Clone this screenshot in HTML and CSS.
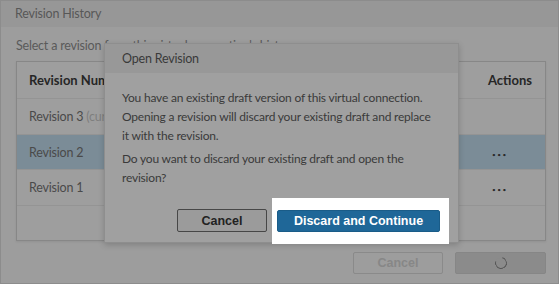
FILE: index.html
```html
<!DOCTYPE html>
<html lang="en">
<head>
  <meta charset="UTF-8">
  <title>Revision History</title>
  <link rel="stylesheet" href="styles.css">
</head>
<body>
  <div class="screen">
    <div class="page-head">Revision History</div>
    <div class="page-body">
      <p class="intro">Select a revision from this virtual connection's history.</p>
      <div class="rev-table">
        <div class="rev-row head">
          <div class="c-name">Revision Number</div>
          <div class="c-date"></div>
          <div class="c-actions">Actions</div>
        </div>
        <div class="rev-row">
          <div class="c-name">Revision 3 <span class="muted">(current)</span></div>
          <div class="c-date"></div>
          <div class="c-actions"></div>
        </div>
        <div class="rev-row selected">
          <div class="c-name">Revision 2</div>
          <div class="c-date"></div>
          <div class="c-actions"><span class="dots">&bull;&bull;&bull;</span></div>
        </div>
        <div class="rev-row">
          <div class="c-name">Revision 1</div>
          <div class="c-date"></div>
          <div class="c-actions"><span class="dots">&bull;&bull;&bull;</span></div>
        </div>
        <div class="rev-row empty"></div>
      </div>
      <div class="page-foot">
        <button class="btn btn-off">Cancel</button>
        <button class="btn btn-busy"><span class="spinner"></span></button>
      </div>
    </div>

    <div class="modal">
      <div class="modal-head">Open Revision</div>
      <div class="modal-body">
        <p>You have an existing draft version of this virtual connection. Opening a revision will discard your existing draft and replace it with the revision.</p>
        <p>Do you want to discard your existing draft and open the revision?</p>
      </div>
      <div class="modal-foot">
        <button class="btn btn-cancel">Cancel</button>
        <div class="highlight">
          <button class="btn btn-primary">Discard and Continue</button>
        </div>
      </div>
    </div>
  </div>
</body>
</html>
```

FILE: styles.css
```css
* {
  box-sizing: border-box;
}
body {
  margin: 0;
  font-family: Lato, "Liberation Sans", sans-serif;
  font-size: 12px;
  letter-spacing: -0.2px;
  color: #3c3c3c;
}
.screen {
  position: relative;
  width: 559px;
  height: 284px;
  background-color: #9d9d9d;
  border: 1px solid #8c8c8c;
  overflow: hidden;
}
.page-head {
  height: 26px;
  background-color: #979797;
  padding: 5px 0 0 14px;
  font-size: 12.5px;
  color: #575757;
}
.page-body {
  padding: 0 12px 0 15px;
}
.intro {
  margin: 11px 0 8px;
  font-size: 12.5px;
  color: #5a5a5a;
  white-space: nowrap;
}
.rev-table {
  border: 1px solid #878787;
  background-color: #9e9e9e;
  box-shadow: 0 1px 2px rgba(0, 0, 0, 0.08);
}
.rev-row {
  display: flex;
  align-items: center;
  height: 36px;
  border-bottom: 1px solid #949494;
  font-size: 12.5px;
  color: #4a4a4a;
}
.rev-row.head {
  height: 37px;
  font-weight: bold;
  color: #262626;
  font-size: 13px;
  letter-spacing: 0;
}
.rev-row.selected {
  background-color: #7b8c97;
  height: 35px;
}
.rev-row.empty {
  border-bottom: none;
  height: 34px;
}
.c-name {
  flex: 0 0 88px;
  padding-left: 12px;
  white-space: nowrap;
  overflow: hidden;
}
.c-date {
  flex: 1;
}
.c-actions {
  flex: 0 0 57px;
}
.muted {
  color: #7e7e7e;
}
.dots {
  padding-left: 4px;
  font-size: 6.5px;
  letter-spacing: 1.5px;
  color: #2a2a2a;
}
.page-foot {
  display: flex;
  justify-content: flex-end;
  gap: 12px;
  margin-top: 11px;
}
.btn {
  font-family: "Liberation Sans", Arial, sans-serif;
  font-weight: bold;
  font-size: 12.5px;
  letter-spacing: 0;
  height: 22px;
  border-radius: 2px;
  cursor: pointer;
  padding: 0;
}
.btn-off {
  width: 90px;
  background-color: #9d9d9d;
  border: 1px solid #8a8a8a;
  color: #878787;
}
.btn-busy {
  width: 91px;
  background-color: #8b8b8b;
  border: 1px solid #868686;
  display: flex;
  align-items: center;
  justify-content: center;
}
.spinner {
  width: 12px;
  height: 12px;
  border: 1.5px solid #555;
  border-top-color: #8b8b8b;
  border-radius: 50%;
  transform: rotate(-30deg);
}
.modal {
  position: absolute;
  left: 103px;
  top: 42px;
  width: 355px;
  height: 200px;
  background-color: #a0a0a0;
  border: 1px solid #8e8e8e;
  box-shadow: 0 2px 6px rgba(0, 0, 0, 0.18);
}
.modal-head {
  height: 29px;
  background-color: #989898;
  padding: 7px 0 0 17px;
  font-size: 12.5px;
  color: #3a3a3a;
}
.modal-body {
  padding: 16px 22px 0 17px;
  line-height: 18.8px;
  color: #3a3a3a;
}
.modal-body p {
  margin: 0 0 5px;
}
.modal-foot {
  display: flex;
  align-items: center;
  margin-top: 10px;
  padding-left: 72px;
  gap: 5px;
}
.btn-cancel {
  width: 90px;
  height: 23px;
  background-color: #9b9b9b;
  border: 1px solid #474747;
  color: #222;
}
.highlight {
  background-color: #fff;
  padding: 12px 9px 12px 5px;
}
.btn-primary {
  display: block;
  width: 163px;
  height: 22px;
  background-color: #1f6798;
  border: 1px solid #1a5c88;
  color: #fff;
}
```
